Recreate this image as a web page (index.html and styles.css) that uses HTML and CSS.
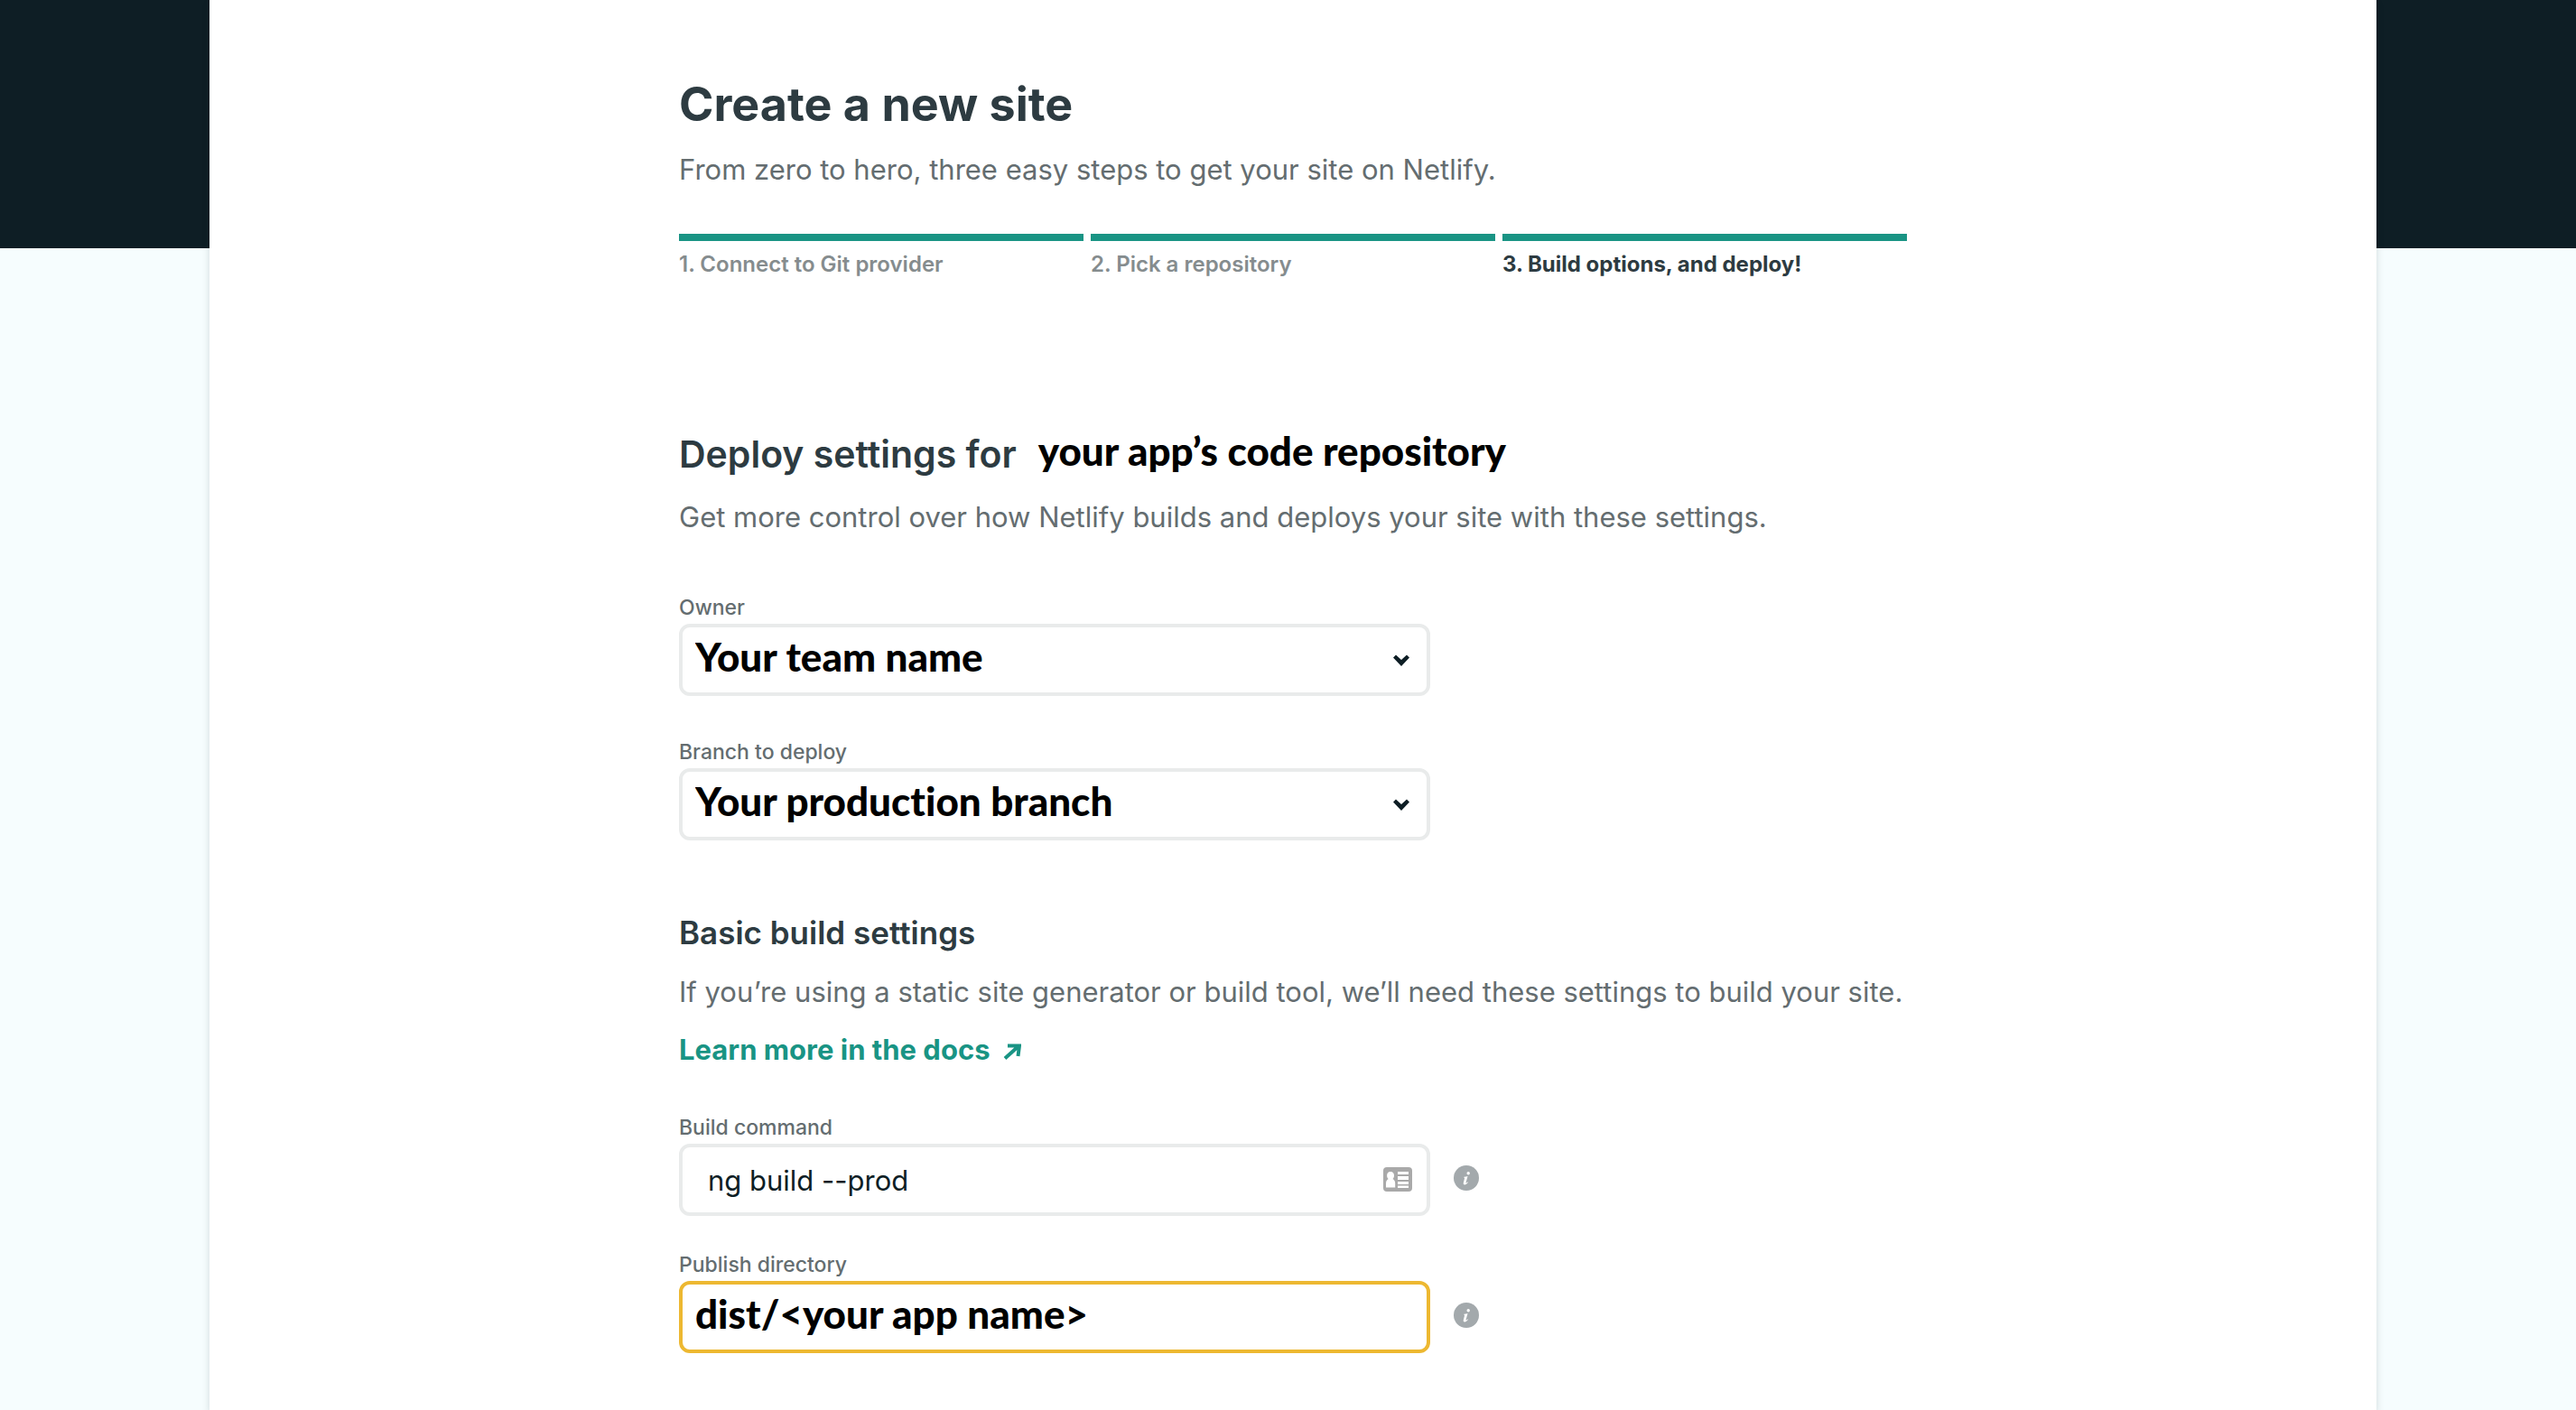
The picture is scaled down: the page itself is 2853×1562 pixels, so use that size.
FILE: index.html
```html
<!DOCTYPE html>
<html lang="en">
<head>
<meta charset="utf-8">
<meta name="viewport" content="width=device-width, initial-scale=1">
<title>Create a new site</title>
<link rel="stylesheet" href="styles.css">
</head>
<body>
<main class="card">
  <div class="content">
    <header>
      <h1 class="title">Create a new site</h1>
      <p class="text">From zero to hero, three easy steps to get your site on Netlify.</p>
      <ol class="steps">
        <li class="step">1. Connect to Git provider</li>
        <li class="step">2. Pick a repository</li>
        <li class="step step-current" aria-current="step">3. Build options, and deploy!</li>
      </ol>
    </header>

    <form class="form">
      <section>
        <h2 class="heading">Deploy settings for <strong class="repo">your app’s code repository</strong></h2>
        <p class="text">Get more control over how Netlify builds and deploys your site with these settings.</p>
        <div class="fields fields-deploy">
          <div class="field">
            <label class="label" for="owner">Owner</label>
            <div class="control">
              <select class="box box-strong" id="owner"><option>Your team name</option></select>
              <svg class="chevron" viewBox="0 0 18 13" aria-hidden="true"><path d="M0 3.500 3 0.500 9 6 15 0.500 18 3.500 9 13z" fill="#0e1e25"/></svg>
            </div>
          </div>
          <div class="field">
            <label class="label" for="branch">Branch to deploy</label>
            <div class="control">
              <select class="box box-strong" id="branch"><option>Your production branch</option></select>
              <svg class="chevron" viewBox="0 0 18 13" aria-hidden="true"><path d="M0 3.500 3 0.500 9 6 15 0.500 18 3.500 9 13z" fill="#0e1e25"/></svg>
            </div>
          </div>
        </div>
      </section>

      <section class="build">
        <h3 class="subheading">Basic build settings</h3>
        <p class="text">If you’re using a static site generator or build tool, we’ll need these settings to build your site.</p>
        <p class="text"><a class="link" href="#docs">Learn more in the docs<svg class="arrow" viewBox="0 0 20 18" aria-hidden="true"><path d="M2 16.500 17 3M5 2.500H18L16.500 14" fill="none" stroke="currentColor" stroke-width="4"/></svg></a></p>
        <div class="fields fields-build">
          <div class="field">
            <label class="label" for="command">Build command</label>
            <div class="row">
              <div class="control">
                <input class="box" id="command" type="text" value="ng build --prod">
                <svg class="contact" viewBox="0 0 32 27" aria-hidden="true">
                  <rect width="32" height="27" rx="4" fill="#a9a9a9"/>
                  <path d="M8 5c2.600 0 4 1.800 4 4.200 0 1.700-.6 3-1.600 3.900 1.800.9 2.800 2.600 2.800 5V22.500H3v-4.400c0-2.400 1-4.100 2.800-5C4.700 12.200 4.100 10.900 4.100 9.200 4.100 6.800 5.400 5 8 5zM16 5h12v3H16zM16 10h12v4H16zM16 16h12v3H16zM16 20.500h12v2.500H16z" fill="#fff"/>
                </svg>
              </div>
              <button class="info" type="button" aria-label="About build command">
                <svg viewBox="0 0 28 28" aria-hidden="true"><circle cx="14" cy="14" r="14" fill="#a3a9ac"/><circle cx="16.200" cy="8.700" r="1.700" fill="#fff"/><path d="M11.500 12.800c1.300-.2 2.700-.5 4-.9L13.600 19c-.2.900.3.900 1.900-.8l.5.500c-1.500 2-2.700 2.700-3.800 2.700-1.300 0-1.700-.9-1.400-2.200l1.200-4.800c.1-.5-.1-.8-.7-.9z" fill="#fff"/></svg>
              </button>
            </div>
          </div>
          <div class="field">
            <label class="label" for="directory">Publish directory</label>
            <div class="row">
              <div class="control">
                <input class="box box-strong box-active" id="directory" type="text" value="dist/&lt;your app name&gt;">
              </div>
              <button class="info" type="button" aria-label="About publish directory">
                <svg viewBox="0 0 28 28" aria-hidden="true"><circle cx="14" cy="14" r="14" fill="#a3a9ac"/><circle cx="16.200" cy="8.700" r="1.700" fill="#fff"/><path d="M11.500 12.800c1.300-.2 2.700-.5 4-.9L13.600 19c-.2.900.3.900 1.900-.8l.5.500c-1.500 2-2.700 2.700-3.800 2.700-1.300 0-1.700-.9-1.400-2.200l1.200-4.800c.1-.5-.1-.8-.7-.9z" fill="#fff"/></svg>
              </button>
            </div>
          </div>
        </div>
      </section>
    </form>
  </div>
</main>
</body>
</html>
```
FILE: styles.css
```css
* {
  box-sizing: border-box;
}

body {
  margin: 0;
  padding-left: 11px;
  min-height: 100vh;
  background: linear-gradient(#0e1e25 275px, #f6fdfe 275px);
  color: #2d3b41;
  font-family: Inter, "Liberation Sans", sans-serif;
}

h1, h2, h3, p, ol {
  margin: 0;
  padding: 0;
}

.card {
  max-width: 2400px;
  min-height: 100vh;
  margin: 0 auto;
  padding: 84px 40px 60px;
  background: #fff;
  box-shadow: 0 4px 8px rgba(14, 30, 37, 0.16);
}

.content {
  max-width: 1360px;
  margin: 0 auto;
}

.title {
  margin-bottom: 16px;
  font-size: 52px;
  line-height: 64px;
  font-weight: 700;
}

.text {
  color: #646d70;
  font-size: 31px;
  line-height: 48px;
}

.steps {
  display: grid;
  grid-template-columns: repeat(3, 1fr);
  gap: 8px;
  margin-top: 47px;
  list-style: none;
}

.step {
  padding-top: 10px;
  border-top: 8px solid #199484;
  color: #858c8e;
  font-size: 24px;
  line-height: 32px;
  font-weight: 600;
}

.step-current {
  color: #2d3b41;
  font-weight: 700;
}

.form {
  margin-top: 166px;
}

.heading {
  display: flex;
  flex-wrap: wrap;
  align-items: flex-start;
  gap: 24px;
  margin-bottom: 18px;
  font-size: 41px;
  line-height: 56px;
  font-weight: 600;
}

.repo {
  color: #000;
  font: 900 44px/48px Lato, "Open Sans", sans-serif;
  font-variant-ligatures: none;
}

.fields {
  display: grid;
}

.fields-deploy {
  gap: 46px;
  margin-top: 60px;
}

.fields-build {
  gap: 38px;
  margin-top: 46px;
}

.field {
  display: grid;
  gap: 2px;
}

.label {
  color: #646d70;
  font-size: 23px;
  line-height: 32px;
  font-weight: 500;
}

.row {
  display: flex;
  align-items: center;
  gap: 26px;
}

.control {
  position: relative;
  flex: 0 1 832px;
  width: 100%;
  max-width: 832px;
}

.box {
  display: block;
  width: 100%;
  height: 80px;
  padding: 0 80px 0 28px;
  border: 4px solid #e9ebeb;
  border-radius: 12px;
  outline: 0;
  appearance: none;
  background: #fff;
  color: #0e1e25;
  font: 400 31px/48px Inter, "Liberation Sans", sans-serif;
}

.box-strong {
  padding: 0 80px 8px 14px;
  color: #000;
  font: 900 44px/48px Lato, "Open Sans", sans-serif;
  font-variant-ligatures: none;
}

.box-active {
  border-color: #edb831;
}

.chevron {
  position: absolute;
  top: 34px;
  right: 23px;
  width: 18px;
  height: 13px;
  pointer-events: none;
}

.contact {
  position: absolute;
  top: 26px;
  right: 20px;
  width: 32px;
  height: 27px;
}

.info {
  display: block;
  width: 28px;
  height: 28px;
  margin-bottom: 4px;
  padding: 0;
  border: 0;
  background: none;
}

.info svg {
  display: block;
}

.build {
  margin-top: 78px;
}

.subheading {
  margin-bottom: 18px;
  font-size: 35px;
  line-height: 48px;
  font-weight: 600;
}

.text + .text {
  margin-top: 16px;
}

.link {
  color: #199484;
  font-weight: 700;
  text-decoration: none;
}

.arrow {
  width: 20px;
  height: 18px;
  margin-left: 14px;
}
```
